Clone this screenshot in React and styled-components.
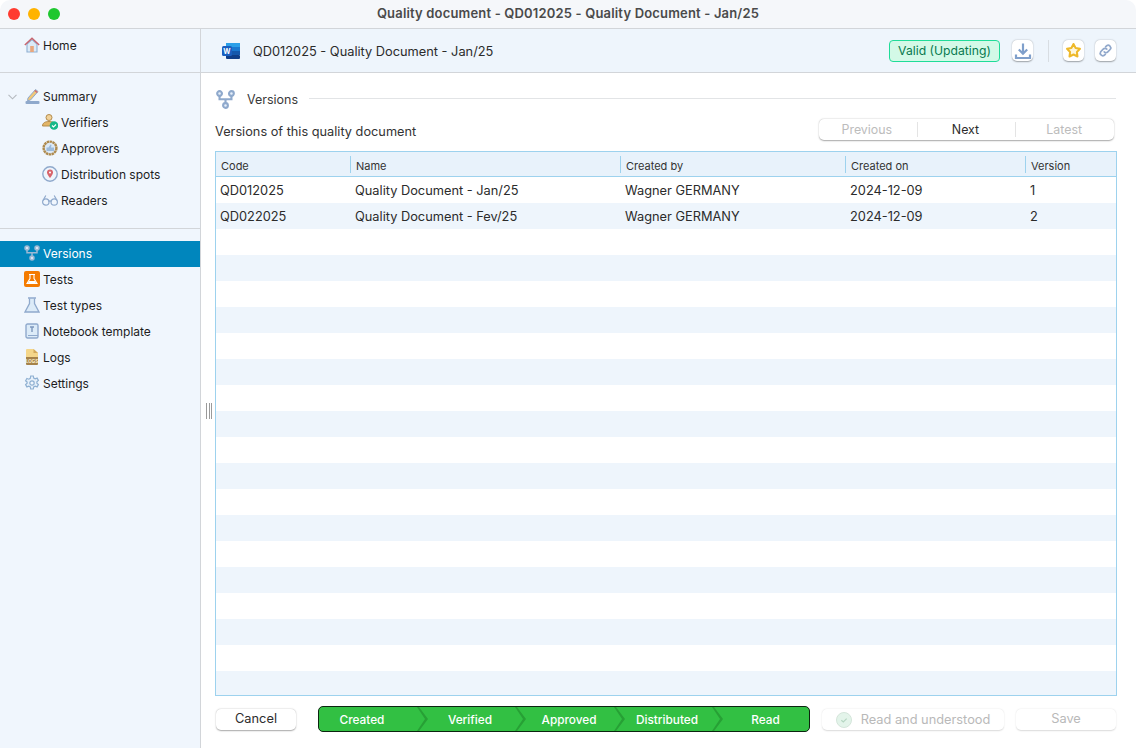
import styled, { createGlobalStyle } from 'styled-components';

const GlobalStyle = createGlobalStyle`
  html, body {
    margin: 0;
    padding: 0;
    height: 100%;
    background: #ffffff;
    overflow: hidden;
  }
  * { box-sizing: border-box; }
  body {
    font-family: Inter, "Liberation Sans", sans-serif;
    font-size: 12px;
    color: #1f1f1f;
  }
`;

const HomeIcon = () => (
  <svg width="16" height="16" viewBox="0 0 16 16">
    <path d="M3 7v8h10V7L8 2.500z" fill="#dcebf8" stroke="#8fb0d2" strokeWidth="1.100" />
    <path d="M.8 8L8 1.200 15.200 8" fill="none" stroke="#c9656f" strokeWidth="1.500" />
    <rect x="6.200" y="9" width="3.600" height="6" fill="#e9a77d" />
  </svg>
);
const SummaryIcon = () => (
  <svg width="15" height="16" viewBox="0 0 15 16">
    <path d="M3 10L10.500 1.500l2.500 2-7.500 8.500-3 .8z" fill="#f0c779" stroke="#8fa9cc" strokeWidth="1" />
    <path d="M9.800 2.500l2.500 2" stroke="#d0656f" strokeWidth="1.400" />
    <rect x="0.500" y="13" width="14" height="3" rx="1" fill="#8fa9cc" />
  </svg>
);
const VerifierIcon = () => (
  <svg width="16" height="16" viewBox="0 0 16 16">
    <circle cx="7" cy="3.500" r="3" fill="#f1d29a" stroke="#b38b4d" />
    <path d="M.5 12c0-3 2.500-4.500 6.500-4.500s5 1 6 3V12z" fill="#e3b566" stroke="#b38b4d" />
    <circle cx="12" cy="11.500" r="4.300" fill="#17b889" />
    <path d="M10 11.500l1.500 1.500L14 10.500" fill="none" stroke="#fff" strokeWidth="1.100" />
  </svg>
);
const ApproverIcon = () => (
  <svg width="16" height="16" viewBox="0 0 16 16">
    <circle cx="8" cy="8" r="6.400" fill="#dce9f6" stroke="#ae8a4e" strokeWidth="2.400" strokeDasharray="2.400 0.500" />
    <path d="M4.500 7.500h2l2-3 1 .5-.5 2.500h3v3.500h-7.500z" fill="#9cbbdc" />
  </svg>
);
const SpotIcon = () => (
  <svg width="16" height="16" viewBox="0 0 16 16">
    <circle cx="8" cy="8" r="7.200" fill="#eef5fc" stroke="#8fa9cc" strokeWidth="1.400" />
    <path d="M8 3.500a3 3 0 0 1 3 3c0 2-3 5.500-3 5.500S5 8.500 5 6.500a3 3 0 0 1 3-3z" fill="#d8646c" />
    <circle cx="8" cy="6.500" r="1" fill="#fff" />
  </svg>
);
const GlassesIcon = () => (
  <svg width="16" height="12" viewBox="0 0 16 12" fill="none" stroke="#8fa9cc" strokeWidth="1.200">
    <circle cx="3.800" cy="8" r="3.200" />
    <circle cx="12.200" cy="8" r="3.200" />
    <path d="M6.500 7.500c1-.8 2-.8 3 0M1 6.500L3.800 1.500M15 6.500L12.200 1.500" />
  </svg>
);
const VersionsIcon = ({ color, node, size = 16, weight = 1.500 }) => (
  <svg width={size} height={size} viewBox="0 0 16 16" fill={node} stroke={color} strokeWidth={weight}>
    <path d="M3 5v2.800h10V5M8 7.800V11" fill="none" />
    <circle cx="3" cy="3" r="2" />
    <circle cx="13" cy="3" r="2" />
    <circle cx="8" cy="13" r="2" />
  </svg>
);
const TestsIcon = () => (
  <svg width="16" height="16" viewBox="0 0 16 16">
    <rect width="16" height="16" rx="2" fill="#f47b00" />
    <path d="M6 3.500v4L3 12.500h10L10 7.500v-4M5 3.500h6" fill="none" stroke="#fff" strokeWidth="1.100" />
    <path d="M5 10h6l1.300 2.500H3.700z" fill="#fff" />
  </svg>
);
const FlaskIcon = () => (
  <svg width="16" height="16" viewBox="0 0 16 16">
    <path d="M5.500 1.500v5L1 15h14L10.500 6.500v-5" fill="#dcebf8" stroke="#8fa9cc" strokeWidth="1.300" />
    <path d="M4 1h8" stroke="#8fa9cc" strokeWidth="1.500" />
  </svg>
);
const NotebookIcon = () => (
  <svg width="14" height="16" viewBox="0 0 14 16">
    <rect x="1" y="1" width="12" height="14" rx="1.500" fill="#dcebf8" stroke="#8fa9cc" strokeWidth="1.400" />
    <path d="M3 12.500h10" stroke="#8fa9cc" />
    <path d="M5 4h4M7 4v5" stroke="#7d98bd" strokeWidth="1.400" />
  </svg>
);
const LogsIcon = () => (
  <svg width="14" height="16" viewBox="0 0 14 16">
    <path d="M1 1a1 1 0 0 1 1-1h6.500L13 4v4H1z" fill="#f4d68a" />
    <path d="M8.500 0v4H13z" fill="#d2a95c" />
    <path d="M1 8h12v7a1 1 0 0 1-1 1H2a1 1 0 0 1-1-1z" fill="#a5824a" />
    <text x="7" y="13.800" fontSize="4.500" fontWeight="700" textAnchor="middle" fill="#fff3d2">LOGS</text>
  </svg>
);
const GearIcon = () => (
  <svg width="16" height="16" viewBox="0 0 16 16" fill="none" stroke="#8fb0d2" strokeWidth="1.200">
    <path d="M6.700 1h2.600l.4 2 1.500.8 1.900-.7 1.300 2.300-1.500 1.300v1.600l1.500 1.300-1.300 2.300-1.900-.7-1.500.8-.4 2H6.700l-.4-2-1.500-.8-1.900.7-1.300-2.300 1.500-1.300V7.100L1.600 5.800l1.300-2.300 1.900.7 1.500-.8z" fill="#e6f0fa" />
    <circle cx="8" cy="8" r="2.200" fill="#f0f6fd" />
  </svg>
);
const WordIcon = () => (
  <svg width="18" height="16" viewBox="0 0 18 16">
    <rect x="4" y="0" width="14" height="4" fill="#2b9fe8" />
    <rect x="4" y="4" width="14" height="4" fill="#1a78d0" />
    <rect x="4" y="8" width="14" height="4" fill="#1558ac" />
    <rect x="4" y="12" width="14" height="4" rx="1" fill="#103e88" />
    <rect x="0" y="3" width="10" height="10" rx="1.500" fill="#1a5fc0" />
    <text x="5" y="10.800" fontSize="7" fontWeight="700" textAnchor="middle" fill="#fff">W</text>
  </svg>
);
const DownloadIcon = () => (
  <svg width="18" height="18" viewBox="0 0 18 18" fill="none" stroke="#7f9fcb" strokeWidth="2.200">
    <path d="M9 1.500v10M4.800 7.500L9 11.700l4.200-4.200" />
    <path d="M2 12.500v3.500h14v-3.500" />
  </svg>
);
const StarIcon = () => (
  <svg width="17" height="17" viewBox="0 0 17 17">
    <path d="M8.500 2l2.100 4 4.400.8-3.100 3.200.6 4.500-4-2-4 2 .6-4.500L2 6.800 6.400 6z" fill="#fdf6dc" stroke="#eeb92a" strokeWidth="2" strokeLinejoin="round" />
  </svg>
);
const LinkIcon = () => (
  <svg width="15" height="15" viewBox="0 0 15 15" fill="none" stroke="#92a9cc" strokeWidth="1.700" strokeLinecap="round">
    <path d="M6.200 8.800a2.500 2.500 0 0 0 3.600 0l2.500-2.500a2.600 2.600 0 0 0-3.600-3.600L7.600 3.800" />
    <path d="M8.800 6.200a2.500 2.500 0 0 0-3.600 0L2.700 8.700a2.600 2.600 0 0 0 3.600 3.600l1.100-1.100" />
  </svg>
);
const CheckCircleIcon = () => (
  <svg width="16" height="16" viewBox="0 0 16 16">
    <circle cx="8" cy="8" r="7.500" fill="#e3f4ea" stroke="#d4e5da" />
    <path d="M5.300 8.200l2 1.800 3.400-3.400" fill="none" stroke="#b5d6c2" strokeWidth="1.200" />
  </svg>
);
const ChevronIcon = () => (
  <svg width="9" height="6" viewBox="0 0 9 6" fill="none" stroke="#b4b9bf" strokeWidth="1.100">
    <path d="M.5.800l4 4 4-4" />
  </svg>
);

const Window = styled.div`
  width: 1136px;
  height: 748px;
  display: flex;
  flex-direction: column;
  background: #ffffff;
  overflow: hidden;
  border-radius: 10px 10px 0 0;
`;
const TitleBar = styled.div`
  height: 29px;
  flex: none;
  display: flex;
  align-items: center;
  justify-content: center;
  padding-bottom: 2px;
  background: #f5f7fa;
  border-bottom: 1px solid #d2d5d9;
  position: relative;
  font-size: 13px;
  letter-spacing: 0.17px;
  font-weight: 600;
  color: #4a4a4a;
`;
const Lights = styled.div`
  position: absolute;
  left: 8px;
  top: 8px;
  display: flex;
  gap: 8px;
`;
const Light = styled.span`
  width: 12px;
  height: 12px;
  border-radius: 50%;
  background: ${(p) => p.$color};
`;
const Body = styled.div`
  flex: 1;
  display: flex;
  min-height: 0;
`;
const Sidebar = styled.nav`
  width: 201px;
  flex: none;
  background: #f0f6fd;
  border-right: 1px solid #d2d5d9;
  display: flex;
  flex-direction: column;
  position: relative;
`;
const Grip = styled.span`
  position: absolute;
  left: 206px;
  top: 374px;
  width: 6px;
  height: 16px;
  border-left: 1px solid #9a9a9a;
  border-right: 1px solid #9a9a9a;
  background: linear-gradient(#9a9a9a, #9a9a9a) center / 1px 100% no-repeat;
`;
const NavSection = styled.div`
  height: ${(p) => p.$height}px;
  flex: none;
  padding-top: ${(p) => p.$top}px;
  border-bottom: ${(p) => (p.$line ? '1px solid #d2d5d9' : 'none')};
`;
const NavItem = styled.div`
  height: 26px;
  display: flex;
  align-items: center;
  gap: 3px;
  padding-left: ${(p) => (p.$sub ? 42 : 24)}px;
  padding-bottom: 2px;
  background: ${(p) => (p.$active ? '#0086bd' : 'transparent')};
  color: ${(p) => (p.$active ? '#ffffff' : '#1d1d1d')};
  position: relative;
`;
const Expander = styled.span`
  position: absolute;
  left: 8px;
  top: 10px;
  display: flex;
`;
const NavIcon = styled.span`
  width: 16px;
  height: 18px;
  display: flex;
  align-items: center;
  justify-content: center;
  flex: none;
`;
const Main = styled.main`
  flex: 1;
  min-width: 0;
  display: flex;
  flex-direction: column;
`;
const DocHeader = styled.header`
  height: 44px;
  flex: none;
  background: #eef5fc;
  border-bottom: 1px solid #d2d5d9;
  display: flex;
  align-items: center;
  padding: 0 20px 0 21px;
`;
const DocTitle = styled.div`
  margin-left: 13px;
  padding-top: 2px;
  font-size: 12.800px;
  color: #2b2b2b;
  flex: 1;
`;
const StatusBadge = styled.span`
  width: 111px;
  height: 22px;
  display: flex;
  align-items: center;
  justify-content: center;
  background: #d3f9e7;
  border: 1px solid #1fdc98;
  border-radius: 4px;
  color: #08794f;
  font-size: 12.200px;
`;
const IconButton = styled.button`
  width: 21px;
  height: 21px;
  padding: 0;
  margin-left: ${(p) => p.$gap}px;
  display: flex;
  align-items: center;
  justify-content: center;
  background: #ffffff;
  border: none;
  border-radius: 5px;
  box-shadow: 0 0.5px 1.500px rgba(0, 0, 0, 0.35);
`;
const HeaderDivider = styled.span`
  width: 1px;
  height: 22px;
  background: #d8dde2;
  margin-left: 15px;
`;
const Content = styled.div`
  flex: 1;
  min-height: 0;
  display: flex;
  flex-direction: column;
  padding: 15px 19px 0 14px;
`;
const SectionHead = styled.div`
  display: flex;
  align-items: center;
  height: 22px;
  padding-left: 1px;
  color: #3a3a3a;
`;
const SectionName = styled.span`
  margin-left: 12px;
  margin-right: 11px;
  font-size: 12.500px;
`;
const SectionRule = styled.span`
  flex: 1;
  height: 1px;
  margin-right: 1px;
  background: #e2e4e6;
  margin-top: -2px;
`;
const ToolRow = styled.div`
  display: flex;
  align-items: center;
  justify-content: space-between;
  height: 22px;
  margin-top: 8px;
  padding-right: 3px;
  color: #333333;
`;
const ToolLabel = styled.span`
  font-size: 12.750px;
  padding-top: 5px;
`;
const Pager = styled.div`
  width: 295px;
  height: 21px;
  display: flex;
  align-items: center;
  background: #ffffff;
  border-radius: 5px;
  box-shadow: 0 0.5px 1.500px rgba(0, 0, 0, 0.35);
`;
const PagerItem = styled.span`
  flex: 1;
  text-align: center;
  font-size: 12.400px;
  padding-right: 2px;
  color: ${(p) => (p.$off ? '#bcbcbc' : '#2c2c2c')};
  & + & { border-left: 1px solid #e4e4e4; }
`;
const TableBox = styled.div`
  flex: none;
  height: 545px;
  margin-top: 11px;
  border: 1px solid #9dd2ee;
  overflow: hidden;
`;
const Grid = styled.div`
  display: grid;
  grid-template-columns: 134px 270px 225px 180px 1fr;
`;
const HeadRow = styled(Grid)`
  height: 25px;
  background: #e8f2fb;
  border-bottom: 1px solid #9dd2ee;
  align-items: center;
  font-size: 11px;
  color: #333333;
`;
const HeadCell = styled.span`
  height: 17px;
  line-height: 20px;
  padding-left: 5px;
  border-left: ${(p) => (p.$first ? 'none' : '1px solid #9dd2ee')};
`;
const DataRow = styled(Grid)`
  height: 26px;
  align-items: center;
  background: ${(p) => (p.$odd ? '#eef5fc' : '#ffffff')};
  color: #2b2b2b;
  font-size: 12.800px;
`;
const Cell = styled.span`
  padding-left: ${(p) => (p.$first ? 4 : 5)}px;
`;
const Footer = styled.div`
  display: flex;
  align-items: center;
  height: 26px;
  margin-top: 10px;
  padding-left: 1px;
`;
const FooterButton = styled.button`
  width: ${(p) => p.$width}px;
  height: 21px;
  margin-left: ${(p) => p.$gap || 0}px;
  margin-top: 1px;
  padding: 0 0 ${(p) => (p.$low ? 0 : 2)}px;
  display: flex;
  align-items: center;
  justify-content: center;
  gap: 9px;
  background: #ffffff;
  border: none;
  border-radius: 5px;
  font: inherit;
  font-size: 12.800px;
  color: ${(p) => (p.$off ? '#b9b9b9' : '#2c2c2c')};
  box-shadow: 0 0.5px 1.500px rgba(0, 0, 0, ${(p) => (p.$off ? 0.15 : 0.35)});
`;
const Stepper = styled.div`
  width: 492px;
  height: 26px;
  margin-left: 22px;
  display: flex;
  background: #32c043;
  border: 1px solid #0c2410;
  border-radius: 5px;
  overflow: hidden;
`;
const Step = styled.div`
  width: ${(p) => p.$width}px;
  height: 100%;
  flex: none;
  display: flex;
  align-items: center;
  justify-content: center;
  padding-right: ${(p) => p.$pad}px;
  padding-top: 2px;
  color: #ffffff;
  font-size: 11.800px;
  font-weight: 500;
  position: relative;
`;
const StepArrow = styled.svg`
  position: absolute;
  right: -1px;
  top: 0;
  width: 11px;
  height: 24px;
`;

const sections = [
  { label: 'Verifiers', icon: <VerifierIcon /> },
  { label: 'Approvers', icon: <ApproverIcon /> },
  { label: 'Distribution spots', icon: <SpotIcon /> },
  { label: 'Readers', icon: <GlassesIcon /> },
];
const tools = [
  { label: 'Versions', icon: <VersionsIcon color="#9db8d4" node="#d6e4f2" />, active: true },
  { label: 'Tests', icon: <TestsIcon /> },
  { label: 'Test types', icon: <FlaskIcon /> },
  { label: 'Notebook template', icon: <NotebookIcon /> },
  { label: 'Logs', icon: <LogsIcon /> },
  { label: 'Settings', icon: <GearIcon /> },
];
const columns = ['Code', 'Name', 'Created by', 'Created on', 'Version'];
const rows = [
  ['QD012025', 'Quality Document - Jan/25', 'Wagner GERMANY', '2024-12-09', '1'],
  ['QD022025', 'Quality Document - Fev/25', 'Wagner GERMANY', '2024-12-09', '2'],
];
const steps = [
  { label: 'Created', width: 108, pad: 22 },
  { label: 'Verified', width: 98, pad: 12 },
  { label: 'Approved', width: 99, pad: 11 },
  { label: 'Distributed', width: 98, pad: 12 },
  { label: 'Read', width: 87, pad: 0, last: true },
];

export default function App() {
  const blanks = Array.from({ length: 18 });
  return (
    <Window>
      <GlobalStyle />
      <TitleBar>
        <Lights>
          <Light $color="#ff3b30" />
          <Light $color="#ffb300" />
          <Light $color="#1ec72f" />
        </Lights>
        Quality document - QD012025 - Quality Document - Jan/25
      </TitleBar>
      <Body>
        <Sidebar>
          <NavSection $height={44} $top={4} $line>
            <NavItem>
              <NavIcon><HomeIcon /></NavIcon>
              Home
            </NavItem>
          </NavSection>
          <NavSection $height={156} $top={11} $line>
            <NavItem>
              <Expander><ChevronIcon /></Expander>
              <NavIcon><SummaryIcon /></NavIcon>
              Summary
            </NavItem>
            {sections.map((item) => (
              <NavItem $sub key={item.label}>
                <NavIcon>{item.icon}</NavIcon>
                {item.label}
              </NavItem>
            ))}
          </NavSection>
          <NavSection $top={12}>
            {tools.map((item) => (
              <NavItem key={item.label} $active={item.active}>
                <NavIcon>{item.icon}</NavIcon>
                {item.label}
              </NavItem>
            ))}
          </NavSection>
          <Grip />
        </Sidebar>
        <Main>
          <DocHeader>
            <WordIcon />
            <DocTitle>QD012025 - Quality Document - Jan/25</DocTitle>
            <StatusBadge>Valid (Updating)</StatusBadge>
            <IconButton $gap={12}><DownloadIcon /></IconButton>
            <HeaderDivider />
            <IconButton $gap={14}><StarIcon /></IconButton>
            <IconButton $gap={11}><LinkIcon /></IconButton>
          </DocHeader>
          <Content>
            <SectionHead>
              <VersionsIcon color="#8fa9cc" node="#e6effa" size={19} weight={1.800} />
              <SectionName>Versions</SectionName>
              <SectionRule />
            </SectionHead>
            <ToolRow>
              <ToolLabel>Versions of this quality document</ToolLabel>
              <Pager>
                <PagerItem $off>Previous</PagerItem>
                <PagerItem>Next</PagerItem>
                <PagerItem $off>Latest</PagerItem>
              </Pager>
            </ToolRow>
            <TableBox>
              <HeadRow>
                {columns.map((name, i) => (
                  <HeadCell key={name} $first={i === 0}>{name}</HeadCell>
                ))}
              </HeadRow>
              {rows.map((row, r) => (
                <DataRow key={row[0]} $odd={r % 2 === 1}>
                  {row.map((value, c) => (
                    <Cell key={c} $first={c === 0}>{value}</Cell>
                  ))}
                </DataRow>
              ))}
              {blanks.map((_, i) => (
                <DataRow key={i} $odd={i % 2 === 1} />
              ))}
            </TableBox>
            <Footer>
              <FooterButton $width={80}>Cancel</FooterButton>
              <Stepper>
                {steps.map((step) => (
                  <Step key={step.label} $width={step.width} $pad={step.pad}>
                    {step.label}
                    {!step.last && (
                      <StepArrow viewBox="0 0 11 24">
                        <path d="M0 0h2l9 12-9 12H0l8-12z" fill="#27a035" />
                      </StepArrow>
                    )}
                  </Step>
                ))}
              </Stepper>
              <FooterButton $width={182} $gap={12} $off $low>
                <CheckCircleIcon />
                Read and understood
              </FooterButton>
              <FooterButton $width={100} $gap={12} $off>Save</FooterButton>
            </Footer>
          </Content>
        </Main>
      </Body>
    </Window>
  );
}
